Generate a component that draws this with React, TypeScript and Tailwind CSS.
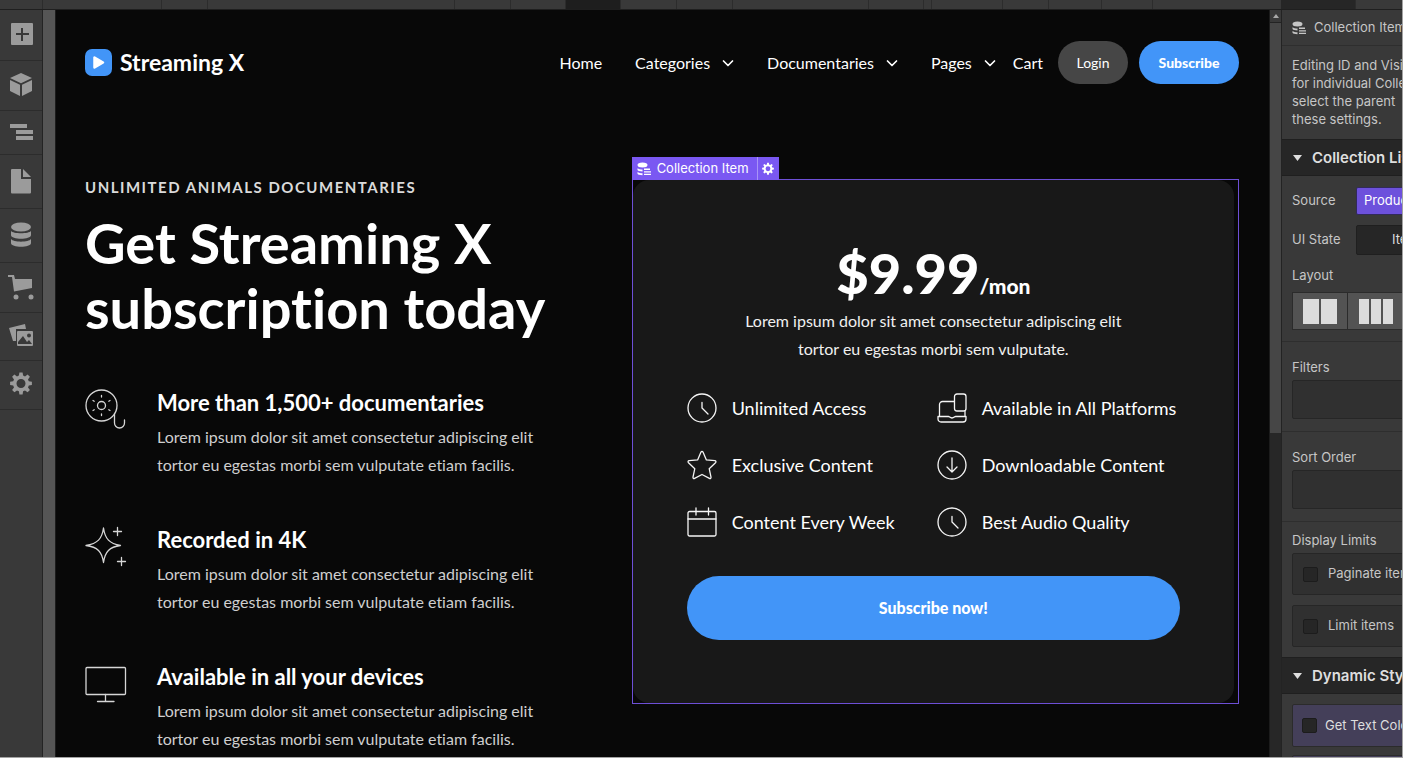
import type { ReactNode } from "react";

const GEAR =
  "M11.4 1.5h3.2l.5 3.1 1.9.8 2.6-1.9 2.3 2.3-1.9 2.6.8 1.9 3.1.5v3.2l-3.1.5-.8 1.9 1.9 2.6-2.3 2.3-2.6-1.9-1.9.8-.5 3.3h-3.2l-.5-3.3-1.9-.8-2.6 1.9-2.3-2.3L6 16.4l-.8-1.9-3.1-.5v-3.2l3.1-.5L6 8.4 4.1 5.800l2.300-2.300L9 5.400l1.900-.8zM13 8a4.500 4.500 0 1 0 0 9 4.500 4.500 0 0 0 0-9z";

type RailItem = { label: string; size: string; icon: ReactNode };

const rail: RailItem[] = [
  {
    label: "Add",
    size: "h-[51px]",
    icon: <path fillRule="evenodd" d="M4 2h20a1 1 0 0 1 1 1v20a1 1 0 0 1-1 1H4a1 1 0 0 1-1-1V3a1 1 0 0 1 1-1zm9 5v5H8v2h5v6h2v-6h6v-2h-6V7z" />,
  },
  {
    label: "Components",
    size: "h-[50px]",
    icon: <path d="M13 1l11 5-11 5.200L2 6zM2 8l10 4.800V24L2 19zM24 8v11l-10 5V12.800z" />,
  },
  {
    label: "Navigator",
    size: "h-[44px]",
    icon: <path d="M2 5h17v4H2zM8 11h17v4H8zM8 17h17v4H8z" />,
  },
  {
    label: "Pages",
    size: "h-[54px]",
    icon: <path d="M4 1h9v10h10v13.500a1 1 0 0 1-1 1H4a1 1 0 0 1-1-1V2a1 1 0 0 1 1-1zM15 1l8 8h-8z" />,
  },
  {
    label: "CMS",
    size: "h-[54px]",
    icon: (
      <>
        <ellipse cx="13" cy="5" rx="10" ry="4.500" />
        <path d="M3 9c2 3 18 3 20 0v4c0 5-20 5-20 0zM3 17c2 3.500 18 3.500 20 0v4c0 5-20 5-20 0z" />
      </>
    ),
  },
  {
    label: "Ecommerce",
    size: "h-[50px]",
    icon: (
      <>
        <path d="M0 1h6l1 4h17v9L6 17.500 4 3H0z" />
        <circle cx="8" cy="23" r="2.500" />
        <circle cx="23" cy="23" r="2.500" />
      </>
    ),
  },
  {
    label: "Assets",
    size: "h-[48px]",
    icon: (
      <>
        <path d="M1 5l16-4 1 5H8v12L5 18z" />
        <path fillRule="evenodd" d="M10 8h14a1 1 0 0 1 1 1v13a1 1 0 0 1-1 1H10a1 1 0 0 1-1-1V9a1 1 0 0 1 1-1zm0 13h14l-3-4-2 2-4-6-5 6zM21 10.500a2 2 0 1 0 0 4 2 2 0 0 0 0-4z" />
      </>
    ),
  },
  { label: "Settings", size: "h-[49px]", icon: <path fillRule="evenodd" d={GEAR} /> },
];

function CollectionIcon() {
  return (
    <svg className="size-[14px] shrink-0" viewBox="0 0 14 14" fill="currentColor" aria-hidden="true">
      <ellipse cx="5.500" cy="3" rx="5" ry="2.500" />
      <path d="M.5 6.200c1 1 3 1.200 5 1.200v2C3 9.400 1 9 .5 8zM.5 10c1 1 3 1.200 5 1.200v2C3 13.200 1 12.800.5 11.800zM7 6.500h6V8H7zM7 9.200h7v1.300H7zM7 11.800h7v1.300H7z" />
    </svg>
  );
}

function Chevron() {
  return (
    <svg className="size-3" viewBox="0 0 12 12" fill="none" stroke="currentColor" strokeWidth="1.700" strokeLinecap="round" strokeLinejoin="round" aria-hidden="true">
      <path d="M1.500 4L6 8.500 10.500 4" />
    </svg>
  );
}

function NavMenu({ children }: { children: ReactNode }) {
  return (
    <button className="flex items-center gap-3">
      {children}
      <Chevron />
    </button>
  );
}

const reel = (
  <>
    <circle cx="16.500" cy="16.500" r="15.500" />
    <circle cx="16.500" cy="16.500" r="4" />
    <path d="M16.500 6.500v1.500M16.500 25v1.500M8 11.500l1.200.7M25 11.500l-1.200.7M8 21.500l1.200-.7M25 21.500l-1.200-.7" />
    <path d="M29.500 24.500V34a5 5 0 0 0 10 0v-3" />
  </>
);
const sparkle = (
  <>
    <path d="M18.500 2c1.500 11 6 15.500 17 17.500-11 1.500-15.500 6-17 17-1.500-11-6-15.500-17.500-17 11.500-2 16-6.500 17.500-17.500z" />
    <path d="M32.500 1.500v8M28.500 5.500h8M36.500 31.500v8M32.500 35.500h8" />
  </>
);
const monitor = (
  <>
    <rect x="1" y="4.500" width="39.500" height="27" rx="1" />
    <path d="M20.500 31.500v7M12.500 38.500h16.500" />
  </>
);

const benefits = [
  { title: "More than 1,500+ documentaries", icon: reel },
  { title: "Recorded in 4K", icon: sparkle },
  { title: "Available in all your devices", icon: monitor },
];

const clock = (
  <>
    <circle cx="15" cy="15" r="14" />
    <path d="M15 9.500V15l6 6" />
  </>
);
const devices = (
  <>
    <path d="M17 8.500H5.500a3 3 0 0 0-3 3V23M28 18v5M1 23.500h10.500c1 0 1.500 1.500 3.500 1.500s2.500-1.500 3.500-1.500H29v2.500a3 3 0 0 1-3 3H4a3 3 0 0 1-3-3z" />
    <rect x="17.500" y="1" width="11.500" height="17" rx="2.500" />
  </>
);
const star = (
  <path d="M15 1.300c.5 0 .8.4 1 .8l3.400 7.800 8.500.8c1.100.1 1.400 1.200.6 2l-6.300 6 1.800 8.500c.2 1-.7 1.700-1.600 1.200L15 24.500l-7.400 3.900c-.9.500-1.800-.2-1.600-1.200l1.800-8.500-6.300-6c-.8-.8-.5-1.900.6-2l8.500-.8L14 2.100c.2-.4.5-.8 1-.8z" />
);
const download = (
  <>
    <circle cx="15" cy="15" r="14" />
    <path d="M15 8v14M10 17l5 5 5-5" />
  </>
);
const calendar = (
  <>
    <rect x="1" y="4.500" width="28" height="24.500" rx="1.500" />
    <path d="M1 12h28M9 1v7M21.500 1v7" />
  </>
);

const perks = [
  { title: "Unlimited Access", icon: clock },
  { title: "Available in All Platforms", icon: devices },
  { title: "Exclusive Content", icon: star },
  { title: "Downloadable Content", icon: download },
  { title: "Content Every Week", icon: calendar },
  { title: "Best Audio Quality", icon: clock },
];

const toolbar = [
  "w-[43px]", "w-[119px]", "w-[46px]", "w-[247px]", "w-[56px]", "w-[55px]",
  "w-[55px] bg-[#1e1e1e]", "w-[56px]", "w-[56px]", "w-[136px]", "w-[55px]",
  "w-[8px]", "w-[71px]", "w-[46px]", "w-[53px]", "w-[51px]",
];

function PanelHeading({ children }: { children: ReactNode }) {
  return (
    <button className="flex h-[37px] w-full items-center gap-[10px] border-y border-[#1f1f1f] bg-[#262626] px-[11px] pt-px text-[15px] font-semibold text-[#dedede]">
      <svg className="h-[6px] w-[9px]" viewBox="0 0 9 6" fill="currentColor" aria-hidden="true">
        <path d="M0 0h9L4.500 6z" />
      </svg>
      {children}
    </button>
  );
}

function Check({ children, tone }: { children: ReactNode; tone: string }) {
  return (
    <label className={"flex items-center rounded-[2px] border " + tone}>
      <input type="checkbox" className="size-[15px] appearance-none rounded-[2px] border border-[#1c1c1c] bg-[#262626]" />
      {children}
    </label>
  );
}

function SidePanel() {
  return (
    <aside className="w-[121px] shrink-0 overflow-hidden border-l border-[#232323] bg-[#393939] font-[Inter,sans-serif] text-[13px] text-[#c6c6c6]">
      <div className="w-60">
        <div className="flex h-9 items-center gap-2 border-b border-[#2e2e2e] px-[10px]">
          <CollectionIcon />
          <span>Collection Item</span>
        </div>
        <p className="px-[10px] pt-[10px] pb-[11px] leading-[18px] whitespace-pre">
          {"Editing ID and Visibility\nfor individual Collection\nselect the parent\nthese settings."}
        </p>
        <PanelHeading>Collection List</PanelHeading>
        <div className="flex items-center pt-[11px] pl-[10px]">
          <span className="w-[64px]">Source</span>
          <button className="h-7 w-40 rounded-[2px] border border-[#322a5c] bg-[#6d51dc] px-[7px] text-left text-white">Products</button>
        </div>
        <div className="flex items-center pt-[10px] pl-[10px]">
          <span className="w-16">UI State</span>
          <button className="h-[30px] w-40 rounded-[2px] border border-[#1f1f1f] bg-[#262626] px-[35px] text-left text-[#dedede]">Items</button>
        </div>
        <div className="border-b border-[#2e2e2e] px-[10px] pt-[10px] pb-[11px]">
          <span className="block leading-5">Layout</span>
          <div className="mt-[7px] flex h-[38px] w-[220px] divide-x divide-[#2b2b2b] border border-[#2b2b2b] bg-[#535353]">
            <button aria-label="Two columns" className="flex w-[55px] items-center justify-center gap-[2px]">
              <span className="h-[25px] w-4 bg-[#dcdcdc]" />
              <span className="h-[25px] w-4 bg-[#dcdcdc]" />
            </button>
            <button aria-label="Three columns" className="flex w-[55px] items-center justify-center gap-[2px]">
              <span className="h-[25px] w-[10px] bg-[#dcdcdc]" />
              <span className="h-[25px] w-[10px] bg-[#dcdcdc]" />
              <span className="h-[25px] w-[10px] bg-[#dcdcdc]" />
            </button>
          </div>
        </div>
        <label className="block border-b border-[#2e2e2e] px-[10px] pt-[15px] pb-3">
          <span className="block leading-5">Filters</span>
          <input className="mt-[3px] block h-[39px] w-full rounded-[2px] border border-[#262626] bg-[#303030]" />
        </label>
        <label className="block border-b border-[#2e2e2e] px-[10px] pt-[15px] pb-3">
          <span className="block leading-5">Sort Order</span>
          <input className="mt-[3px] block h-[39px] w-full rounded-[2px] border border-[#262626] bg-[#303030]" />
        </label>
        <div className="flex flex-col px-[10px] pt-2 pb-[10px]">
          <span className="leading-5">Display Limits</span>
          <div className="mt-[3px] flex flex-col gap-[10px]">
            <Check tone="h-[42px] gap-[10px] border-[#262626] bg-[#303030] px-[10px]">Paginate items</Check>
            <Check tone="h-[42px] gap-[10px] border-[#262626] bg-[#303030] px-[10px]">Limit items</Check>
          </div>
        </div>
        <PanelHeading>Dynamic Style</PanelHeading>
        <div className="flex flex-col gap-2 px-[10px] pt-[10px] text-[#dedede]">
          <Check tone="h-[43px] gap-2 border-[#2b2b2b] bg-[#443f59] px-[9px]">Get Text Color</Check>
          <div className="h-[43px] rounded-[2px] border border-[#2b2b2b] bg-[#443f59]" />
        </div>
      </div>
    </aside>
  );
}

export default function App() {
  return (
    <div className="flex h-screen flex-col overflow-hidden border-r border-b border-[#a3a3a3] bg-[#080808] font-[Lato,sans-serif] text-white antialiased [font-variant-ligatures:none]">
      <div className="flex h-[10px] shrink-0 overflow-hidden border-b border-[#1f1f1f] bg-[#393939]">
        <div className="flex min-w-0 flex-1 overflow-hidden">
          {toolbar.map((w, i) => (
            <span key={i} className={"shrink-0 border-r border-[#2c2c2c] " + w} />
          ))}
        </div>
        <div className="flex w-[121px] shrink-0">
          <span className="w-[75px] border-r border-[#2c2c2c] bg-[#262626]" />
        </div>
      </div>

      <div className="flex min-h-0 flex-1">
        <nav aria-label="Tools" className="w-[43px] shrink-0 border-r border-[#232323] bg-[#393939]">
          {rail.map((item) => (
            <button key={item.label} aria-label={item.label} className={"flex w-full items-center justify-center border-b border-[#2c2c2c] pb-[2px] text-[#9b9b9b] " + item.size}>
              <svg className="size-[26px]" viewBox="0 0 26 26" fill="currentColor" fillRule="evenodd" aria-hidden="true">
                {item.icon}
              </svg>
            </button>
          ))}
        </nav>
        <div className="w-[13px] shrink-0 border-r border-[#1c1c1c] bg-[#555555]" />

        <main className="min-w-0 flex-1 overflow-hidden pr-[30px] pl-[29px]">
          <header className="flex items-center justify-between pt-[31px]">
            <a href="#home" className="flex items-center gap-2 text-[23px] leading-[27px] font-bold">
              <svg className="size-[27px]" viewBox="0 0 27 27" aria-hidden="true">
                <rect width="27" height="27" rx="7" fill="#4295f8" />
                <path d="M9.500 8.500v10l8.500-5z" fill="#fff" stroke="#fff" strokeWidth="2.500" strokeLinejoin="round" />
              </svg>
              Streaming X
            </a>
            <nav aria-label="Main" className="flex items-center text-[16px]">
              <div className="mr-[17px] flex items-center gap-[33px]">
                <a href="#home">Home</a>
                <NavMenu>Categories</NavMenu>
                <NavMenu>Documentaries</NavMenu>
                <NavMenu>Pages</NavMenu>
              </div>
              <a href="#cart" className="mr-[15px]">Cart</a>
              <button className="mr-[11px] h-[43px] w-[70px] rounded-full bg-[#464646] text-[14px]">Login</button>
              <button className="h-[43px] w-[100px] rounded-full bg-[#4295f8] text-[14px] font-black">Subscribe</button>
            </nav>
          </header>

          <div className="grid grid-cols-[minmax(0,9fr)_minmax(0,10fr)] items-start pt-[95px]">
            <section>
              <p className="text-[15px] leading-4 font-bold tracking-widest text-[#dadada]">UNLIMITED ANIMALS DOCUMENTARIES</p>
              <h1 className="mt-[15px] text-[56px] leading-[65px] font-bold">
                Get Streaming X<br />subscription today
              </h1>
              <ul className="mt-12 flex flex-col gap-[52px]">
                {benefits.map((b) => (
                  <li key={b.title} className="flex gap-[30px]">
                    <svg className="mt-px size-[42px] shrink-0" viewBox="0 0 42 42" fill="none" stroke="#d6d6d6" strokeWidth="1.300" strokeLinecap="round" strokeLinejoin="round" aria-hidden="true">
                      {b.icon}
                    </svg>
                    <div>
                      <h2 className="text-[22px] leading-[29px] font-bold">{b.title}</h2>
                      <p className="mt-[6px] mb-[-6px] text-[16px] leading-7 text-[#cfcfcf]">
                        Lorem ipsum dolor sit amet consectetur adipiscing elit
                        <br />
                        tortor eu egestas morbi sem vulputate etiam facilis.
                      </p>
                    </div>
                  </li>
                ))}
              </ul>
            </section>

            <section className="relative border border-[#6d4fd6] pr-1">
              <div className="absolute bottom-full -left-px flex h-[23px] items-stretch bg-[#7a58f2] font-[Inter,sans-serif] text-[13px]">
                <span className="flex items-center gap-[6px] border-r border-[#a893f7] pr-2 pl-[5px]">
                  <CollectionIcon />
                  Collection Item
                </span>
                <button aria-label="Collection settings" className="flex w-[21px] items-center justify-center">
                  <svg className="size-[14px]" viewBox="0 0 26 26" fill="currentColor" fillRule="evenodd" aria-hidden="true">
                    <path d={GEAR} />
                  </svg>
                </button>
              </div>
              <div className="rounded-[16px] bg-[#181818] px-[54px] pt-[74px] pb-[63px]">
                <p className="text-center text-[56px] leading-[38px] font-black">
                  $9.99<span className="text-[21px]">/mon</span>
                </p>
                <p className="mt-[2px] text-center text-[16px] leading-7 text-[#f0f0f0]">
                  Lorem ipsum dolor sit amet consectetur adipiscing elit
                  <br />
                  tortor eu egestas morbi sem vulputate.
                </p>
                <ul className="mt-[30px] grid grid-cols-[250px_minmax(0,1fr)] gap-y-[27px]">
                  {perks.map((p) => (
                    <li key={p.title} className="flex items-center gap-[15px] text-[18px] leading-[30px] whitespace-nowrap">
                      <svg className="size-[30px] shrink-0" viewBox="0 0 30 30" fill="none" stroke="#f5f5f5" strokeWidth="1.300" strokeLinecap="round" strokeLinejoin="round" aria-hidden="true">
                        {p.icon}
                      </svg>
                      {p.title}
                    </li>
                  ))}
                </ul>
                <button className="mt-[39px] h-16 w-full rounded-full bg-[#4295f8] text-[16px] font-black">Subscribe now!</button>
              </div>
            </section>
          </div>
        </main>

        <div className="flex w-3 shrink-0 flex-col border-l border-[#1c1c1c] bg-[#272727]">
          <div className="flex h-3 items-center justify-center bg-[#393939]">
            <svg className="h-1 w-[6px]" viewBox="0 0 6 4" fill="#a8a8a8" aria-hidden="true">
              <path d="M3 0l3 4H0z" />
            </svg>
          </div>
          <div className="h-[411px] border-t border-[#232323] bg-[#464646]" />
        </div>

        <SidePanel />
      </div>
    </div>
  );
}
